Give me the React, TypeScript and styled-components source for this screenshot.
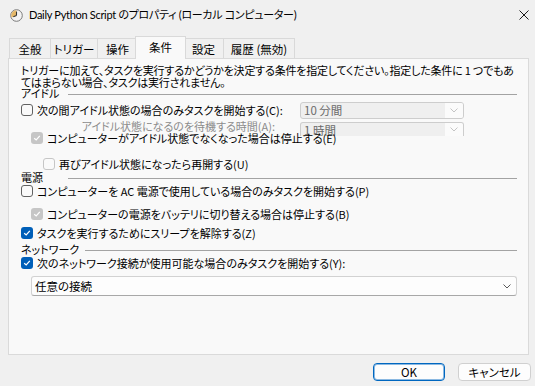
import React from "react";
import styled, { createGlobalStyle, css } from "styled-components";

type CheckState = "off" | "offDisabled" | "on" | "onDisabled";

const GlobalStyle = createGlobalStyle`
    html, body {
        margin: 0;
        padding: 0;
        background: #f0f0f0;
    }
    body {
        font-family: "Noto Sans CJK JP", "Noto Sans", sans-serif;
        font-feature-settings: "palt";
        color: #000000;
        font-size: 11px;
    }
`;

const Window = styled.div`
    width: 535px;
    height: 386px;
    background: #f0f0f0;
    display: flex;
    flex-direction: column;
    overflow: hidden;
`;

const TitleBar = styled.div`
    height: 30px;
    display: flex;
    align-items: center;
    padding-left: 10px;
`;

const Title = styled.div`
    margin-left: 6px;
    font-family: Lato, "Noto Sans CJK JP", sans-serif;
    font-size: 11px;
    letter-spacing: -0.3px;
    line-height: 14px;
    white-space: nowrap;
`;

const CloseButton = styled.div`
    margin-left: auto;
    width: 22px;
    height: 30px;
    display: flex;
    align-items: center;
    justify-content: center;
`;

const Body = styled.div`
    padding: 6px 6px 0 8px;
`;

const TabStrip = styled.div`
    display: flex;
    align-items: flex-end;
    height: 22px;
    padding-left: 1px;
`;

const Tab = styled.div<{ $w: number; $active?: boolean }>`
    box-sizing: border-box;
    width: ${(p) => p.$w}px;
    height: 20px;
    margin-right: -1px;
    border: 1px solid #d9d9d9;
    border-bottom: none;
    background: #f0f0f0;
    display: flex;
    align-items: center;
    justify-content: center;
    font-size: 11.5px;
    white-space: nowrap;
    ${(p) =>
        p.$active &&
        css`
            height: 23px;
            margin: 0 -3px -1px -2px;
            background: #f9f9f9;
            position: relative;
            z-index: 1;
            padding-bottom: 3px;
        `}
`;

const Panel = styled.div`
    box-sizing: border-box;
    width: 521px;
    height: 297px;
    border: 1px solid #dadada;
    background: #f9f9f9;
    padding: 5px 11px 0 12px;
    display: flex;
    flex-direction: column;
`;

const Description = styled.div`
    padding-top: 1px;
    line-height: 11.5px;
    letter-spacing: -0.2px;
    white-space: nowrap;
`;

const GroupHeader = styled.div<{ $mt: number }>`
    display: flex;
    align-items: center;
    height: 14px;
    margin-top: ${(p) => p.$mt}px;
`;

const GroupLabel = styled.span`
    min-width: 41px;
    margin-right: 6px;
    white-space: nowrap;
`;

const Rule = styled.div`
    flex: 1;
    height: 1px;
    margin-top: 3px;
    background: #a3a3a3;
`;

const CheckRow = styled.div<{ $mt: number; $indent?: number }>`
    display: flex;
    align-items: center;
    gap: 4px;
    height: 14px;
    margin-top: ${(p) => p.$mt}px;
    padding-left: ${(p) => p.$indent ?? 0}px;
    white-space: nowrap;
`;

const FieldRow = styled.div<{ $mt: number }>`
    display: grid;
    grid-template-columns: 279px 164px;
    grid-template-rows: 14px;
    align-items: center;
    height: 14px;
    margin-top: ${(p) => p.$mt}px;
    white-space: nowrap;
`;

const FieldLabel = styled.div`
    display: flex;
    align-items: center;
    gap: 4px;
`;

const MutedLabel = styled.div`
    color: #8c8c8c;
    text-align: right;
    padding-right: 25px;
`;

const Box = styled.span<{ $state: CheckState }>`
    box-sizing: border-box;
    width: 12px;
    height: 12px;
    flex: none;
    border-radius: 3px;
    display: flex;
    align-items: center;
    justify-content: center;
    ${(p) =>
        ({
            off: css`
                border: 1px solid #626262;
                background: #fafafa;
            `,
            offDisabled: css`
                border: 1px solid #c6c6c6;
                background: #fafafa;
            `,
            on: css`
                background: #005fb8;
            `,
            onDisabled: css`
                background: #c6c6c6;
            `,
        })[p.$state]}
`;

const Combo = styled.div<{ $h: number; $disabled?: boolean; $clipped?: boolean; $ml?: number; $mt?: number }>`
    box-sizing: border-box;
    height: ${(p) => p.$h}px;
    margin-left: ${(p) => p.$ml ?? 0}px;
    margin-top: ${(p) => p.$mt ?? 0}px;
    display: flex;
    align-items: center;
    border: 1px solid ${(p) => (p.$disabled ? "#cdcdcd" : "#d2d2d2")};
    border-bottom-color: ${(p) => (p.$disabled ? "#cdcdcd" : "#a8a8a8")};
    border-radius: 3px;
    background: ${(p) => (p.$disabled ? "#efefef" : "#fdfdfd")};
    color: ${(p) => (p.$disabled ? "#6a6a6a" : "#000000")};
    font-size: 11.5px;
    overflow: hidden;
    ${(p) =>
        p.$clipped &&
        css`
            align-self: start;
            border-bottom: none;
            border-radius: 3px 3px 0 0;
        `}
`;

const ComboText = styled.span`
    flex: 1;
    padding-left: 3px;
    white-space: nowrap;
`;

const ComboArrow = styled.span<{ $disabled?: boolean }>`
    width: 18px;
    align-self: stretch;
    display: flex;
    align-items: center;
    justify-content: center;
    background: ${(p) => (p.$disabled ? "#fbfbfb" : "transparent")};
`;

const Footer = styled.div`
    display: flex;
    justify-content: flex-end;
    gap: 13px;
    padding: 8px 4px 0 0;
`;

const Button = styled.div<{ $primary?: boolean; $w: number }>`
    box-sizing: border-box;
    width: ${(p) => p.$w}px;
    height: 18px;
    border-radius: 4px;
    background: #fdfdfd;
    display: flex;
    align-items: center;
    justify-content: center;
    font-size: 11.5px;
    border: 1px solid ${(p) => (p.$primary ? "#0067c0" : "#d0d0d0")};
    ${(p) =>
        p.$primary &&
        css`
            box-shadow: inset 0 0 0 1px rgba(0, 103, 192, 0.45);
        `}
`;

const Check = ({ state }: { state: CheckState }) => (
    <Box $state={state}>
        {(state === "on" || state === "onDisabled") && (
            <svg width="8" height="8" viewBox="0 0 8 8">
                <polyline points="1.2,4.2 3.2,6 6.8,1.8" fill="none" stroke="#ffffff" strokeWidth="1.2" />
            </svg>
        )}
    </Box>
);

const Chevron = ({ color }: { color: string }) => (
    <svg width="8" height="5" viewBox="0 0 8 5">
        <polyline points="0.5,0.5 4,4 7.5,0.5" fill="none" stroke={color} strokeWidth="1" />
    </svg>
);

const ClockIcon = () => (
    <svg width="13" height="13" viewBox="0 0 13 13">
        <circle cx="6.5" cy="6.5" r="5.8" fill="#f3f3f3" stroke="#7a7a7a" strokeWidth="1" />
        <path d="M6.5 6.5 L6.5 1.2 A5.3 5.3 0 0 0 1.6 8.4 Z" fill="#e5b868" />
        <line x1="6.5" y1="6.5" x2="6.5" y2="2.6" stroke="#333333" strokeWidth="1.1" />
        <line x1="6.5" y1="6.5" x2="3.3" y2="7.7" stroke="#333333" strokeWidth="1.1" />
    </svg>
);

const App = () => {
    const tabs = [
        { label: "全般", w: 42 },
        { label: "トリガー", w: 48 },
        { label: "操作", w: 41 },
        { label: "条件", w: 51, active: true },
        { label: "設定", w: 41 },
        { label: "履歴 (無効)", w: 72 },
    ];

    return (
        <Window>
            <GlobalStyle />
            <TitleBar>
                <ClockIcon />
                <Title>Daily Python Script のプロパティ (ローカル コンピューター)</Title>
                <CloseButton>
                    <svg width="10" height="10" viewBox="0 0 10 10">
                        <path d="M0.5 0.5 L9.5 9.5 M9.5 0.5 L0.5 9.5" stroke="#1a1a1a" strokeWidth="1" />
                    </svg>
                </CloseButton>
            </TitleBar>
            <Body>
                <TabStrip>
                    {tabs.map((t) => (
                        <Tab key={t.label} $w={t.w} $active={t.active}>
                            {t.label}
                        </Tab>
                    ))}
                </TabStrip>
                <Panel>
                    <Description>
                        トリガーに加えて、タスクを実行するかどうかを決定する条件を指定してください。指定した条件に 1 つでもあ
                        <br />
                        てはまらない場合、タスクは実行されません。
                    </Description>

                    <GroupHeader $mt={-2}>
                        <GroupLabel>アイドル</GroupLabel>
                        <Rule />
                    </GroupHeader>
                    <FieldRow $mt={3}>
                        <FieldLabel>
                            <Check state="off" />
                            <span>次の間アイドル状態の場合のみタスクを開始する(C):</span>
                        </FieldLabel>
                        <Combo $h={17} $disabled>
                            <ComboText>10 分間</ComboText>
                            <ComboArrow $disabled>
                                <Chevron color="#c4c4c4" />
                            </ComboArrow>
                        </Combo>
                    </FieldRow>
                    <FieldRow $mt={2}>
                        <MutedLabel>アイドル状態になるのを待機する時間(A):</MutedLabel>
                        <Combo $h={14} $mt={3} $disabled $clipped>
                            <ComboText>1 時間</ComboText>
                            <ComboArrow $disabled>
                                <Chevron color="#c4c4c4" />
                            </ComboArrow>
                        </Combo>
                    </FieldRow>
                    <CheckRow $mt={-2} $indent={10}>
                        <Check state="onDisabled" />
                        <span>コンピューターがアイドル状態でなくなった場合は停止する(E)</span>
                    </CheckRow>
                    <CheckRow $mt={12} $indent={22}>
                        <Check state="offDisabled" />
                        <span>再びアイドル状態になったら再開する(U)</span>
                    </CheckRow>

                    <GroupHeader $mt={-1}>
                        <GroupLabel>電源</GroupLabel>
                        <Rule />
                    </GroupHeader>
                    <CheckRow $mt={0}>
                        <Check state="off" />
                        <span>コンピューターを AC 電源で使用している場合のみタスクを開始する(P)</span>
                    </CheckRow>
                    <CheckRow $mt={9} $indent={10}>
                        <Check state="onDisabled" />
                        <span>コンピューターの電源をバッテリに切り替える場合は停止する(B)</span>
                    </CheckRow>
                    <CheckRow $mt={5}>
                        <Check state="on" />
                        <span>タスクを実行するためにスリープを解除する(Z)</span>
                    </CheckRow>

                    <GroupHeader $mt={2}>
                        <GroupLabel>ネットワーク</GroupLabel>
                        <Rule />
                    </GroupHeader>
                    <CheckRow $mt={0}>
                        <Check state="on" />
                        <span>次のネットワーク接続が使用可能な場合のみタスクを開始する(Y):</span>
                    </CheckRow>
                    <Combo $h={20} $ml={10} $mt={6}>
                        <ComboText>任意の接続</ComboText>
                        <ComboArrow>
                            <Chevron color="#5a5a5a" />
                        </ComboArrow>
                    </Combo>
                </Panel>
            </Body>
            <Footer>
                <Button $primary $w={72}>
                    OK
                </Button>
                <Button $w={73}>キャンセル</Button>
            </Footer>
        </Window>
    );
};

export default App;
